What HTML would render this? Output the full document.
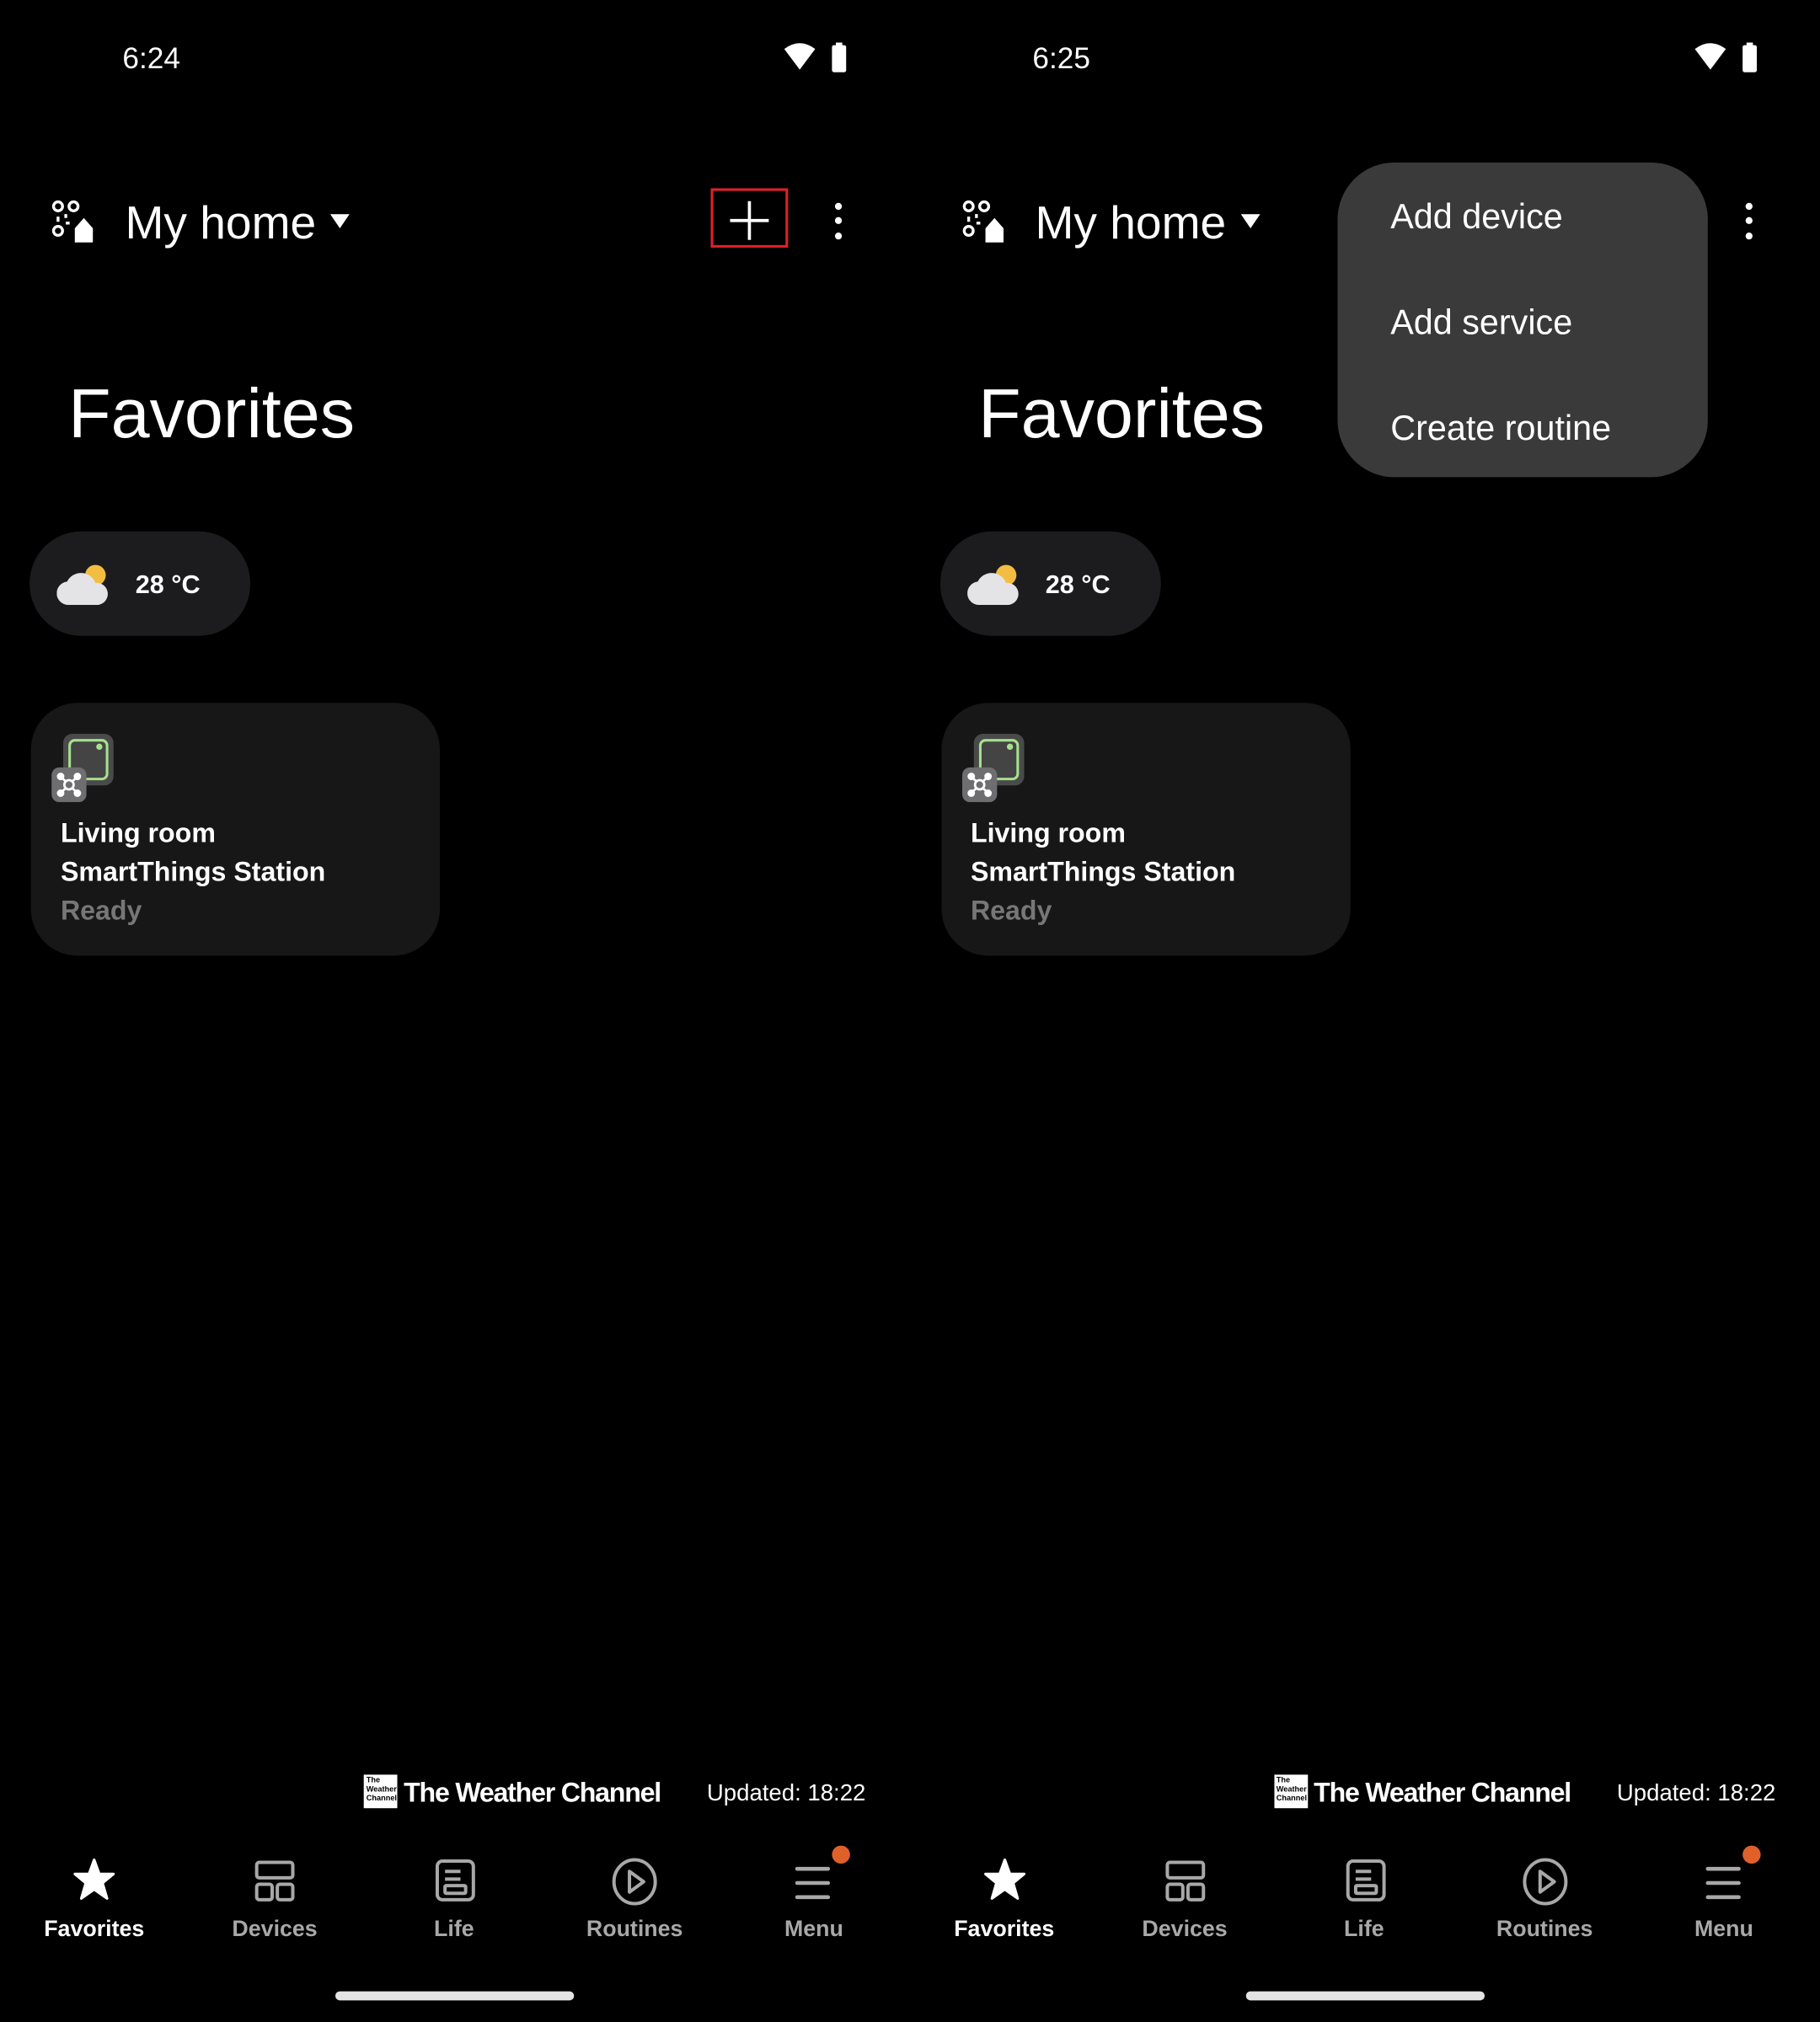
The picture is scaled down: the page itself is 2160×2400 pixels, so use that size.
<!DOCTYPE html>
<html><head><meta charset="utf-8">
<style>
html,body{margin:0;padding:0;background:#000;width:2160px;height:2400px;overflow:hidden}
#root{position:absolute;left:0;top:0;width:1411px;height:1568px;transform:scale(1.53083);transform-origin:0 0;font-family:"Liberation Sans",sans-serif;color:#fff}
.p{position:absolute;top:0;width:706px;height:1568px}
.a{position:absolute;white-space:nowrap}
.time{left:95px;top:32px;font-size:23px}
.home{left:97px;top:152px;font-size:36px}
.fav{left:53px;top:290px;font-size:54px}
.pill{left:23px;top:412px;width:171px;height:81px;border-radius:40px;background:#1c1c1e}
.card{left:24px;top:545px;width:317px;height:196px;border-radius:36px;background:#171717}
.t1{left:47px;font-size:21px;font-weight:bold}
.nav{top:1485px;font-size:17.5px;font-weight:bold;color:#a8a8a8;transform:translateX(-50%)}
.menu{left:1037px;top:126px;width:287px;height:244px;border-radius:44px;background:#3a3a3a}
.mi{left:41px;font-size:27px}
.twc{left:313px;top:1379px;font-size:21px;font-weight:bold;letter-spacing:-0.8px}
</style></head><body><div id="root">

<div class="p" style="left:0">
 <div class="a time">6:24</div>
 <svg class="a" style="left:600px;top:30px" width="64" height="30" viewBox="0 0 64 30">
  <path d="M8 8 Q20 -1 32 8 L20 24 Z" fill="#fff"/>
  <rect x="45" y="5" width="11" height="21" rx="1.5" fill="#fff"/><rect x="48" y="3" width="5" height="3" fill="#fff"/>
 </svg>
 <svg class="a" style="left:40px;top:155px" width="34" height="34" viewBox="0 0 34 34" fill="none" stroke="#fff" stroke-width="2.2">
  <circle cx="5" cy="5" r="3.5"/><circle cx="17" cy="5" r="3.5"/><circle cx="5" cy="24" r="3.5"/>
  <path d="M11 11v3M5 13v4M11 18h3"/>
  <path d="M18 22 L25 14 L32 22 V33 H18 Z" fill="#fff" stroke="none"/>
 </svg>
 <div class="a home">My home</div>
 <svg class="a" style="left:256px;top:166px" width="15" height="11"><path d="M0 0H15L7.5 11Z" fill="#fff"/></svg>
 <div class="a" style="left:551px;top:146px;width:56px;height:42px;border:2px solid #e0202a"></div>
 <svg class="a" style="left:565px;top:155px" width="32" height="32"><path d="M16 1V31M1 16H31" stroke="#fff" stroke-width="2.4"/></svg>
 <svg class="a" style="left:645px;top:155px" width="10" height="34" fill="#fff"><circle cx="5" cy="5" r="2.7"/><circle cx="5" cy="16" r="2.7"/><circle cx="5" cy="28" r="2.7"/></svg>
 <div class="a fav">Favorites</div>
 <div class="a pill">
  <svg class="a" style="left:21px;top:25px" width="44" height="34" viewBox="0 0 44 34">
   <circle cx="30" cy="9" r="8" fill="#f3bd41"/>
   <path d="M10 32 A9 9 0 0 1 8 14 A12 12 0 0 1 30 15 A8.5 8.5 0 0 1 32 32 Z" fill="#e4e4e6"/>
  </svg>
  <div class="a" style="left:82px;top:31px;font-size:20px;font-weight:bold">28 °C</div>
 </div>
 <div class="a card">
  <svg class="a" style="left:15px;top:23px" width="52" height="54" viewBox="0 0 52 54">
   <rect x="10" y="1" width="39" height="40" rx="7" fill="#4a4a4a"/>
   <rect x="15" y="6" width="29" height="30" rx="4" fill="#444" stroke="#a6e08e" stroke-width="2"/>
   <circle cx="38" cy="11" r="2.4" fill="#a6e08e"/>
   <rect x="1" y="27" width="27" height="27" rx="6" fill="#6e6e70"/>
   <g stroke="#fff" stroke-width="1.8" fill="#fff"><path d="M8 34 L21 47 M21 34 L8 47"/><circle cx="8" cy="34" r="2"/><circle cx="21" cy="34" r="2"/><circle cx="8" cy="47" r="2"/><circle cx="21" cy="47" r="2"/></g>
   <circle cx="14.5" cy="40.5" r="3.6" fill="#6e6e70" stroke="#fff" stroke-width="1.8"/>
  </svg>
  <div class="a t1" style="left:23px;top:90px">Living room</div>
  <div class="a t1" style="left:23px;top:120px">SmartThings Station</div>
  <div class="a t1" style="left:23px;top:150px;color:#777">Ready</div>
 </div>
 <div class="a" style="left:282px;top:1376px;width:26px;height:26px;background:#fff;color:#000;font-size:6px;line-height:7px;font-weight:bold;padding:2px 0 0 2px;box-sizing:border-box">The<br>Weather<br>Channel</div>
 <div class="a twc">The Weather Channel</div>
 <div class="a" style="left:548px;top:1380px;font-size:18px">Updated: 18:22</div>
 <svg class="a" style="left:57px;top:1441px" width="32" height="34"><path d="M16 1 L20 12 L31 12 L22.5 19 L26 31 L16 24 L6 31 L9.5 19 L1 12 L12 12 Z" fill="#fff" stroke="#fff" stroke-linejoin="round" stroke-width="2"/></svg>
 <svg class="a" style="left:197px;top:1441px" width="32" height="34" fill="none" stroke="#a8a8a8" stroke-width="2.6"><rect x="2" y="3" width="28" height="12" rx="2"/><rect x="2" y="20" width="12" height="12" rx="2"/><rect x="18" y="20" width="12" height="12" rx="2"/></svg>
 <svg class="a" style="left:337px;top:1441px" width="32" height="34" fill="none" stroke="#a8a8a8" stroke-width="2.6"><rect x="2" y="2" width="28" height="30" rx="4"/><path d="M8 10h12M8 16h12"/><rect x="8" y="21" width="16" height="6" rx="1"/></svg>
 <svg class="a" style="left:474px;top:1440px" width="36" height="38" fill="none" stroke="#a8a8a8" stroke-width="2.6"><ellipse cx="18" cy="19" rx="16" ry="17"/><path d="M14 11 L25 19 L14 27 Z" stroke-linejoin="round"/></svg>
 <svg class="a" style="left:615px;top:1441px" width="32" height="34" stroke="#a8a8a8" stroke-width="3" stroke-linecap="round"><path d="M3 8h24M3 19h24M3 30h24"/></svg>
 <div class="a" style="left:645px;top:1431px;width:14px;height:14px;border-radius:7px;background:#e0602a"></div>
 <div class="a nav" style="left:73px;color:#fff">Favorites</div>
 <div class="a nav" style="left:213px">Devices</div>
 <div class="a nav" style="left:352px">Life</div>
 <div class="a nav" style="left:492px">Routines</div>
 <div class="a nav" style="left:631px">Menu</div>
 <div class="a" style="left:260px;top:1544px;width:185px;height:7px;border-radius:4px;background:#e4e4e4"></div>
</div>

<div class="p" style="left:705.5px">
 <div class="a time">6:25</div>
 <svg class="a" style="left:600px;top:30px" width="64" height="30" viewBox="0 0 64 30">
  <path d="M8 8 Q20 -1 32 8 L20 24 Z" fill="#fff"/>
  <rect x="45" y="5" width="11" height="21" rx="1.5" fill="#fff"/><rect x="48" y="3" width="5" height="3" fill="#fff"/>
 </svg>
 <svg class="a" style="left:40px;top:155px" width="34" height="34" viewBox="0 0 34 34" fill="none" stroke="#fff" stroke-width="2.2">
  <circle cx="5" cy="5" r="3.5"/><circle cx="17" cy="5" r="3.5"/><circle cx="5" cy="24" r="3.5"/>
  <path d="M11 11v3M5 13v4M11 18h3"/>
  <path d="M18 22 L25 14 L32 22 V33 H18 Z" fill="#fff" stroke="none"/>
 </svg>
 <div class="a home">My home</div>
 <svg class="a" style="left:256px;top:166px" width="15" height="11"><path d="M0 0H15L7.5 11Z" fill="#fff"/></svg>
 <svg class="a" style="left:645px;top:155px" width="10" height="34" fill="#fff"><circle cx="5" cy="5" r="2.7"/><circle cx="5" cy="16" r="2.7"/><circle cx="5" cy="28" r="2.7"/></svg>
 <div class="a fav">Favorites</div>
 <div class="a pill">
  <svg class="a" style="left:21px;top:25px" width="44" height="34" viewBox="0 0 44 34">
   <circle cx="30" cy="9" r="8" fill="#f3bd41"/>
   <path d="M10 32 A9 9 0 0 1 8 14 A12 12 0 0 1 30 15 A8.5 8.5 0 0 1 32 32 Z" fill="#e4e4e6"/>
  </svg>
  <div class="a" style="left:82px;top:31px;font-size:20px;font-weight:bold">28 °C</div>
 </div>
 <div class="a card">
  <svg class="a" style="left:15px;top:23px" width="52" height="54" viewBox="0 0 52 54">
   <rect x="10" y="1" width="39" height="40" rx="7" fill="#4a4a4a"/>
   <rect x="15" y="6" width="29" height="30" rx="4" fill="#444" stroke="#a6e08e" stroke-width="2"/>
   <circle cx="38" cy="11" r="2.4" fill="#a6e08e"/>
   <rect x="1" y="27" width="27" height="27" rx="6" fill="#6e6e70"/>
   <g stroke="#fff" stroke-width="1.8" fill="#fff"><path d="M8 34 L21 47 M21 34 L8 47"/><circle cx="8" cy="34" r="2"/><circle cx="21" cy="34" r="2"/><circle cx="8" cy="47" r="2"/><circle cx="21" cy="47" r="2"/></g>
   <circle cx="14.5" cy="40.5" r="3.6" fill="#6e6e70" stroke="#fff" stroke-width="1.8"/>
  </svg>
  <div class="a t1" style="left:23px;top:90px">Living room</div>
  <div class="a t1" style="left:23px;top:120px">SmartThings Station</div>
  <div class="a t1" style="left:23px;top:150px;color:#777">Ready</div>
 </div>
 <div class="a" style="left:282px;top:1376px;width:26px;height:26px;background:#fff;color:#000;font-size:6px;line-height:7px;font-weight:bold;padding:2px 0 0 2px;box-sizing:border-box">The<br>Weather<br>Channel</div>
 <div class="a twc">The Weather Channel</div>
 <div class="a" style="left:548px;top:1380px;font-size:18px">Updated: 18:22</div>
 <svg class="a" style="left:57px;top:1441px" width="32" height="34"><path d="M16 1 L20 12 L31 12 L22.5 19 L26 31 L16 24 L6 31 L9.5 19 L1 12 L12 12 Z" fill="#fff" stroke="#fff" stroke-linejoin="round" stroke-width="2"/></svg>
 <svg class="a" style="left:197px;top:1441px" width="32" height="34" fill="none" stroke="#a8a8a8" stroke-width="2.6"><rect x="2" y="3" width="28" height="12" rx="2"/><rect x="2" y="20" width="12" height="12" rx="2"/><rect x="18" y="20" width="12" height="12" rx="2"/></svg>
 <svg class="a" style="left:337px;top:1441px" width="32" height="34" fill="none" stroke="#a8a8a8" stroke-width="2.6"><rect x="2" y="2" width="28" height="30" rx="4"/><path d="M8 10h12M8 16h12"/><rect x="8" y="21" width="16" height="6" rx="1"/></svg>
 <svg class="a" style="left:474px;top:1440px" width="36" height="38" fill="none" stroke="#a8a8a8" stroke-width="2.6"><ellipse cx="18" cy="19" rx="16" ry="17"/><path d="M14 11 L25 19 L14 27 Z" stroke-linejoin="round"/></svg>
 <svg class="a" style="left:615px;top:1441px" width="32" height="34" stroke="#a8a8a8" stroke-width="3" stroke-linecap="round"><path d="M3 8h24M3 19h24M3 30h24"/></svg>
 <div class="a" style="left:645px;top:1431px;width:14px;height:14px;border-radius:7px;background:#e0602a"></div>
 <div class="a nav" style="left:73px;color:#fff">Favorites</div>
 <div class="a nav" style="left:213px">Devices</div>
 <div class="a nav" style="left:352px">Life</div>
 <div class="a nav" style="left:492px">Routines</div>
 <div class="a nav" style="left:631px">Menu</div>
 <div class="a" style="left:260px;top:1544px;width:185px;height:7px;border-radius:4px;background:#e4e4e4"></div>
</div>

<div class="a menu">
 <div class="a mi" style="top:27px">Add device</div>
 <div class="a mi" style="top:109px">Add service</div>
 <div class="a mi" style="top:191px">Create routine</div>
</div>

</div></body></html>
